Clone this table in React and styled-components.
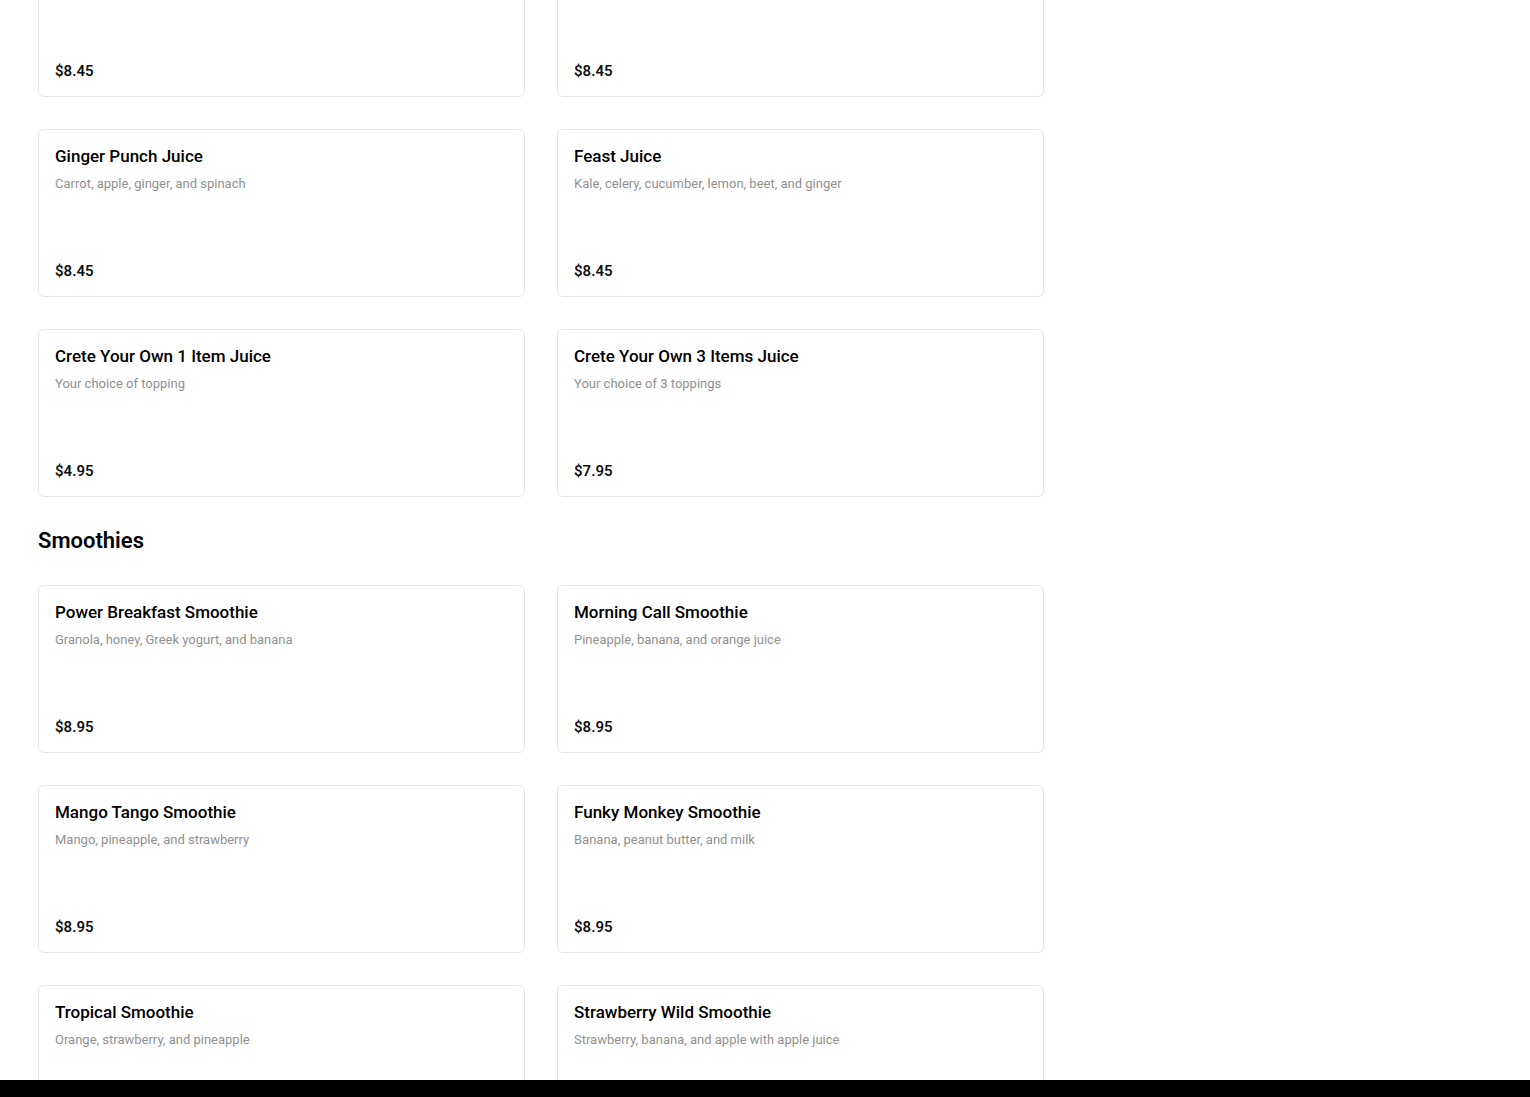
import React from "react"
import styled, { createGlobalStyle } from "styled-components"

const GlobalStyle = createGlobalStyle`
  html, body {
    margin: 0;
    padding: 0;
    background: #ffffff;
    font-family: Roboto, "Liberation Sans", Arial, sans-serif;
    color: #111;
    overflow: hidden;
  }
`

const Page = styled.div`
  display: flex;
  padding: 0 38px;
  height: 1080px;
  overflow: hidden;
`

// the list is scrolled down a little, so the first row is partly above the top
const Menu = styled.div`
  width: 1006px;
  display: flex;
  flex-direction: column;
  margin-top: -71px;
`

const Section = styled.section`
  display: flex;
  flex-direction: column;
`

const SectionTitle = styled.h2`
  margin: 0;
  padding: 28px 0 28px;
  font-size: 22px;
  line-height: 32px;
  font-weight: 600;
  color: #000;
`

const Grid = styled.div`
  display: grid;
  grid-template-columns: 1fr 1fr;
  column-gap: 32px;
  row-gap: 32px;
`

const Card = styled.div`
  box-sizing: border-box;
  height: 168px;
  border: 1px solid #e6e6e6;
  border-radius: 6px;
  padding: 16px;
  display: flex;
  flex-direction: column;
  justify-content: space-between;
  background: #fff;
`

const Name = styled.div`
  font-size: 17px;
  line-height: 20px;
  font-weight: 500;
  color: #000;
`

const Desc = styled.div`
  margin-top: 10px;
  font-size: 13px;
  line-height: 15px;
  color: #919191;
`

const Price = styled.div`
  font-size: 15px;
  line-height: 18px;
  font-weight: 600;
  color: #111;
`

const BottomBar = styled.div`
  position: fixed;
  left: 0;
  right: 0;
  bottom: 0;
  height: 17px;
  background: #000;
`

const juices = [
  { name: "", desc: "", price: "$8.45" },
  { name: "", desc: "", price: "$8.45" },
  { name: "Ginger Punch Juice", desc: "Carrot, apple, ginger, and spinach", price: "$8.45" },
  { name: "Feast Juice", desc: "Kale, celery, cucumber, lemon, beet, and ginger", price: "$8.45" },
  { name: "Crete Your Own 1 Item Juice", desc: "Your choice of topping", price: "$4.95" },
  { name: "Crete Your Own 3 Items Juice", desc: "Your choice of 3 toppings", price: "$7.95" },
]

const smoothies = [
  { name: "Power Breakfast Smoothie", desc: "Granola, honey, Greek yogurt, and banana", price: "$8.95" },
  { name: "Morning Call Smoothie", desc: "Pineapple, banana, and orange juice", price: "$8.95" },
  { name: "Mango Tango Smoothie", desc: "Mango, pineapple, and strawberry", price: "$8.95" },
  { name: "Funky Monkey Smoothie", desc: "Banana, peanut butter, and milk", price: "$8.95" },
  { name: "Tropical Smoothie", desc: "Orange, strawberry, and pineapple", price: "$8.95" },
  { name: "Strawberry Wild Smoothie", desc: "Strawberry, banana, and apple with apple juice", price: "$8.95" },
]

function Item({ item }) {
  return (
    <Card>
      <div>
        {item.name && <Name>{item.name}</Name>}
        {item.desc && <Desc>{item.desc}</Desc>}
      </div>
      <Price>{item.price}</Price>
    </Card>
  )
}

export default function App() {
  return (
    <>
      <GlobalStyle />
      <Page>
        <Menu>
          <Section>
            <Grid>
              {juices.map((j, i) => (
                <Item key={i} item={j} />
              ))}
            </Grid>
          </Section>
          <Section>
            <SectionTitle>Smoothies</SectionTitle>
            <Grid>
              {smoothies.map((s) => (
                <Item key={s.name} item={s} />
              ))}
            </Grid>
          </Section>
        </Menu>
      </Page>
      <BottomBar />
    </>
  )
}
